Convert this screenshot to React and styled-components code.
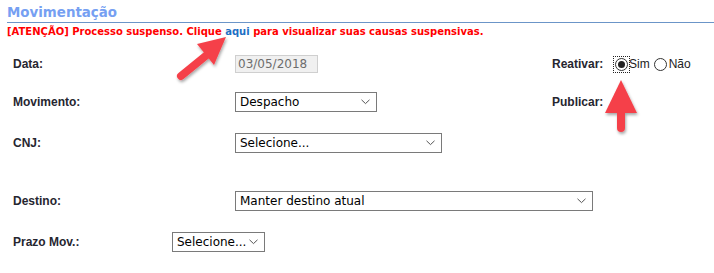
import React from "react";
import styled, { createGlobalStyle } from "styled-components";

const Global = createGlobalStyle`
  html, body { margin: 0; padding: 0; background: #fff; }
  body { width: 714px; height: 273px; overflow: hidden; }
`;

const Page = styled.div`
  position: relative;
  width: 714px;
  height: 273px;
  padding-left: 7px;
  box-sizing: border-box;
  font-family: "Liberation Sans", Arial, sans-serif;
`;

const Title = styled.div`
  height: 22px;
  line-height: 26px;
  font-family: "DejaVu Sans", Verdana, sans-serif;
  font-weight: bold;
  font-size: 13.4px;
  color: #76a0f2;
  border-bottom: 1px solid #6b95c8;
  box-sizing: content-box;
`;

const Warning = styled.div`
  height: 16px;
  line-height: 17px;
  font-family: "DejaVu Sans", Verdana, sans-serif;
  font-weight: bold;
  font-size: 10px;
  color: #ff0000;
  white-space: nowrap;
`;

const Link = styled.span`
  color: #1e6fc4;
`;

const Form = styled.div`
  padding-left: 6px;
`;

const Row = styled.div`
  display: grid;
  grid-template-columns: ${(p) => (p.$narrow ? "159px" : "222px")} 317px 62px auto;
  align-items: center;
  height: 20px;
  margin-top: ${(p) => p.$top}px;
`;

const Label = styled.div`
  font-weight: bold;
  font-size: 12px;
  color: #262630;
`;

const TextInput = styled.div`
  width: 83px;
  height: 18px;
  box-sizing: border-box;
  background: #f0f0f0;
  border: 1px solid #cfcfcf;
  font-family: "DejaVu Sans", "Segoe UI", sans-serif;
  font-size: 12px;
  line-height: 16px;
  color: #6d6d6d;
  padding-left: 2px;
`;

const Select = styled.div`
  width: ${(p) => p.$w}px;
  height: 20px;
  box-sizing: border-box;
  border: 1px solid #7a7a7a;
  background: #fff;
  display: flex;
  align-items: center;
  justify-content: space-between;
  padding: 0 6px 0 4px;
  font-family: "DejaVu Sans", "Segoe UI", sans-serif;
  font-size: 12px;
  color: #000;
`;

const Chevron = () => (
  <svg width="9" height="6" viewBox="0 0 9 6">
    <path d="M0.5 0.8 L4.5 4.6 L8.5 0.8" fill="none" stroke="#555" strokeWidth="1" />
  </svg>
);

const Radios = styled.div`
  display: flex;
  align-items: center;
  font-size: 12px;
  color: #222;
`;

const RadioWrap = styled.span`
  display: inline-flex;
  align-items: center;
  justify-content: center;
  width: 15px;
  height: 15px;
  box-sizing: border-box;
  outline: ${(p) => (p.$focus ? "1px dotted #222" : "none")};
  margin-right: ${(p) => (p.$focus ? "0" : "1px")};
`;

const RadioCircle = styled.span`
  width: 13px;
  height: 13px;
  box-sizing: border-box;
  border-radius: 50%;
  border: 1px solid #333;
  background: #fff;
  display: flex;
  align-items: center;
  justify-content: center;
  &::after {
    content: "";
    width: 7px;
    height: 7px;
    border-radius: 50%;
    background: ${(p) => (p.$checked ? "#222" : "transparent")};
  }
`;

const RadioText = styled.span`
  margin-right: 3px;
`;

const Arrow = styled.svg`
  position: absolute;
  overflow: visible;
  left: ${(p) => p.$x}px;
  top: ${(p) => p.$y}px;
`;

export default function App() {
  return (
    <>
      <Global />
      <Page>
        <Title>Movimentação</Title>
        <Warning>
          [ATENÇÃO] Processo suspenso. Clique <Link>aqui</Link> para visualizar suas causas suspensivas.
        </Warning>
        <Form>
          <Row $top={15}>
            <Label>Data:</Label>
            <div><TextInput>03/05/2018</TextInput></div>
            <Label>Reativar:</Label>
            <Radios>
              <RadioWrap $focus><RadioCircle $checked /></RadioWrap>
              <RadioText>Sim</RadioText>
              <RadioWrap><RadioCircle /></RadioWrap>
              <RadioText>Não</RadioText>
            </Radios>
          </Row>
          <Row $top={18}>
            <Label>Movimento:</Label>
            <div><Select $w={142}>Despacho<Chevron /></Select></div>
            <Label>Publicar:</Label>
            <div />
          </Row>
          <Row $top={21}>
            <Label>CNJ:</Label>
            <div><Select $w={207}>Selecione...<Chevron /></Select></div>
          </Row>
          <Row $top={38}>
            <Label>Destino:</Label>
            <div><Select $w={358}>Manter destino atual<Chevron /></Select></div>
          </Row>
          <Row $top={21} $narrow>
            <Label>Prazo Mov.:</Label>
            <div><Select $w={93}>Selecione...<Chevron /></Select></div>
          </Row>
        </Form>
        <Arrow $x={170} $y={34} width="60" height="50" viewBox="0 0 60 50">
          <defs>
            <filter id="sh" x="-30%" y="-30%" width="160%" height="160%">
              <feDropShadow dx="1" dy="2" stdDeviation="1.5" floodColor="#000" floodOpacity="0.35" />
            </filter>
          </defs>
          <g filter="url(#sh)">
            <line x1="11" y1="42" x2="38" y2="20" stroke="#f5414a" strokeWidth="8" strokeLinecap="round" />
            <polygon points="56,3 27,10 44,31" fill="#f5414a" />
          </g>
        </Arrow>
        <Arrow $x={600} $y={78} width="44" height="56" viewBox="0 0 44 56">
          <defs>
            <filter id="sh2" x="-30%" y="-30%" width="160%" height="160%">
              <feDropShadow dx="1" dy="2" stdDeviation="1.5" floodColor="#000" floodOpacity="0.35" />
            </filter>
          </defs>
          <g filter="url(#sh2)">
            <line x1="21" y1="30" x2="21" y2="50" stroke="#f5414a" strokeWidth="8" strokeLinecap="round" />
            <polygon points="21,2 5,35 37,35" fill="#f5414a" />
          </g>
        </Arrow>
      </Page>
    </>
  );
}
